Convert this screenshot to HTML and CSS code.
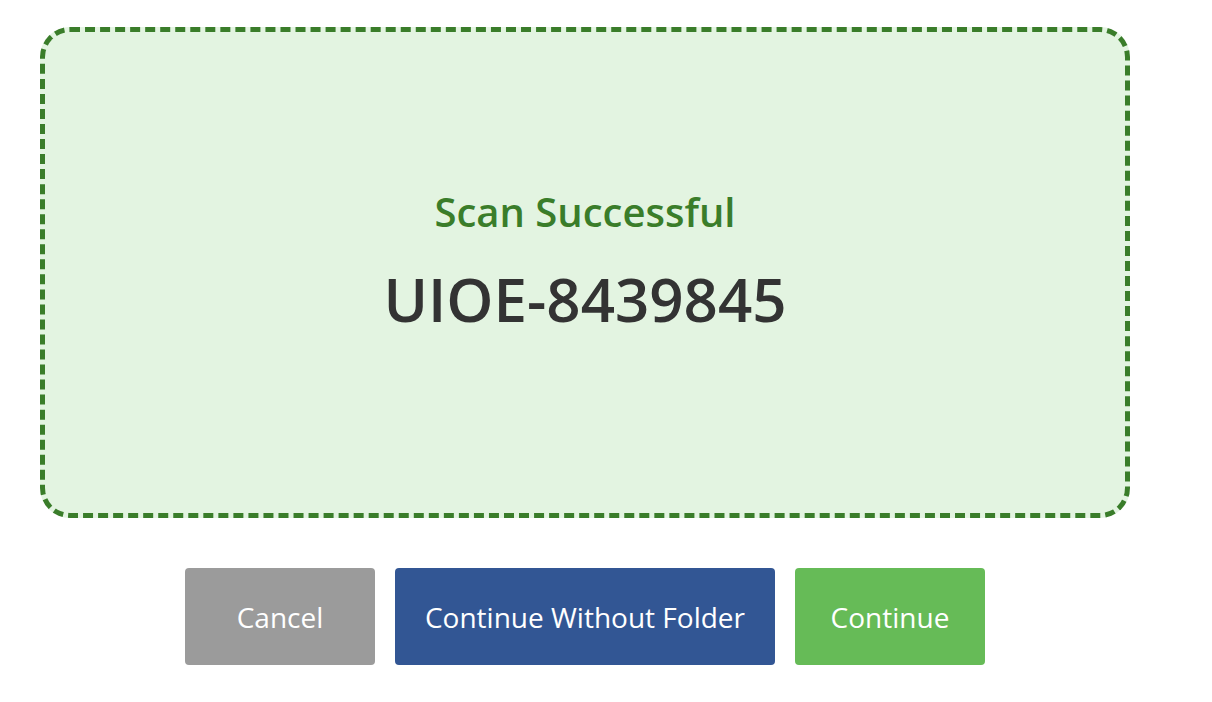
FILE: index.html
```html
<!DOCTYPE html>
<html lang="en">
<head>
    <meta charset="UTF-8">
    <meta name="viewport" content="width=device-width, initial-scale=1.0">
    <title>Scan Result</title>
    <link rel="stylesheet" href="styles.css">
</head>
<body>
    <div class="scan-page">
        <!-- Scan result -->
        <div class="scan-box">
            <div class="scan-status">Scan Successful</div>
            <div class="scan-code">UIOE-8439845</div>
        </div>

        <div class="actions">
            <button type="button" class="btn btn-cancel">Cancel</button>
            <button type="button" class="btn btn-nofolder">Continue Without Folder</button>
            <button type="button" class="btn btn-continue">Continue</button>
        </div>
    </div>
</body>
</html>
```

FILE: styles.css
```css
body {
    margin: 0;
    font-family: "Open Sans", Arial, sans-serif;
    background-color: #ffffff;
}
.scan-page {
    width: 1090px;
    padding: 27px 0 0 40px;
}
.scan-box {
    box-sizing: border-box;
    height: 491px;
    border: 5px dashed #3a7d2a;
    border-radius: 30px;
    background-color: #e3f4e1;
    display: flex;
    flex-direction: column;
    align-items: center;
    justify-content: center;
    padding-bottom: 21px;
}
.scan-status {
    color: #3a7d2a;
    font-size: 40px;
    font-weight: 600;
    line-height: 54px;
}
.scan-code {
    color: #333333;
    font-size: 60px;
    font-weight: 600;
    line-height: 80px;
    margin-top: 20px;
}
.actions {
    display: flex;
    justify-content: center;
    gap: 20px;
    margin-top: 50px;
}
.btn {
    height: 97px;
    width: 190px;
    border: none;
    border-radius: 4px;
    color: white;
    font-family: "Open Sans", Arial, sans-serif;
    font-size: 28px;
    cursor: pointer;
}
.btn-cancel {
    background-color: #9b9b9b;
}
.btn-nofolder {
    width: 380px;
    background-color: #325694;
}
.btn-continue {
    background-color: #66bb57;
}
```
